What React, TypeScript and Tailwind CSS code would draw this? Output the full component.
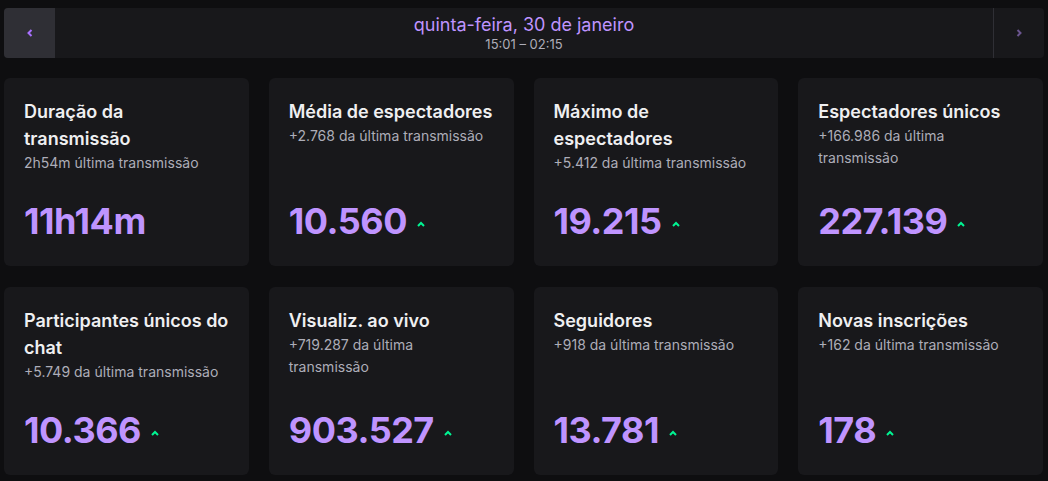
const stats = [
  { title: 'Duração da transmissão', sub: '2h54m última transmissão', value: '11h14m', up: false },
  { title: 'Média de espectadores', sub: '+2.768 da última transmissão', value: '10.560', up: true },
  { title: 'Máximo de espectadores', sub: '+5.412 da última transmissão', value: '19.215', up: true },
  { title: 'Espectadores únicos', sub: '+166.986 da última transmissão', value: '227.139', up: true },
  { title: 'Participantes únicos do chat', sub: '+5.749 da última transmissão', value: '10.366', up: true },
  { title: 'Visualiz. ao vivo', sub: '+719.287 da última transmissão', value: '903.527', up: true },
  { title: 'Seguidores', sub: '+918 da última transmissão', value: '13.781', up: true },
  { title: 'Novas inscrições', sub: '+162 da última transmissão', value: '178', up: true },
];

function Chevron({ dir, className }: { dir: 'left' | 'right'; className: string }) {
  return (
    <svg width="8" height="8" viewBox="0 0 8 8" className={className}>
      <path
        d={dir === 'left' ? 'M5.5 1 L2.5 4 L5.5 7' : 'M2.5 1 L5.5 4 L2.5 7'}
        fill="none"
        stroke="currentColor"
        strokeWidth="2"
      />
    </svg>
  );
}

function UpArrow() {
  return (
    <svg width="8" height="6" viewBox="0 0 8 6" className="text-[#00f593] ml-2.5 mt-1.5">
      <path d="M1 5 L4 2 L7 5" fill="none" stroke="currentColor" strokeWidth="2" />
    </svg>
  );
}

export default function App() {
  return (
    <div
      className="w-[1048px] h-[481px] bg-[#0e0e10] px-1 pt-2 overflow-hidden"
      style={{ fontFamily: 'Inter, "Noto Sans", sans-serif' }}
    >
      {/* date navigation */}
      <div className="flex h-[50px] bg-[#18181b] rounded-sm">
        <button className="w-[51px] flex items-center justify-center bg-[#2f2f35] rounded-l-sm">
          <Chevron dir="left" className="text-[#a970ff]" />
        </button>
        <div className="flex-1 flex flex-col items-center justify-center">
          <div className="text-[18px] leading-[23px] text-[#bf94ff]">quinta-feira, 30 de janeiro</div>
          <div className="text-[13px] leading-[17px] text-[#adadb8]">15:01 – 02:15</div>
        </div>
        <button className="w-[51px] flex items-center justify-center border-l border-[#2f2f35]">
          <Chevron dir="right" className="text-[#6b5590]" />
        </button>
      </div>

      {/* stat cards */}
      <div className="grid grid-cols-4 gap-x-5 gap-y-[21px] mt-5 pr-px">
        {stats.map((s, i) => (
          <div key={i} className="h-[188px] bg-[#18181b] rounded-md px-5 pt-5 pb-[25px] flex flex-col">
            <div className="text-[18px] leading-[27px] font-semibold text-[#efeff1]">{s.title}</div>
            <div className="text-[14px] leading-[22px] text-[#adadb8]">{s.sub}</div>
            <div className="mt-auto flex items-center">
              <span className="text-[36px] leading-[40px] font-bold text-[#bf94ff] tracking-[-0.5px]">{s.value}</span>
              {s.up && <UpArrow />}
            </div>
          </div>
        ))}
      </div>
    </div>
  );
}
